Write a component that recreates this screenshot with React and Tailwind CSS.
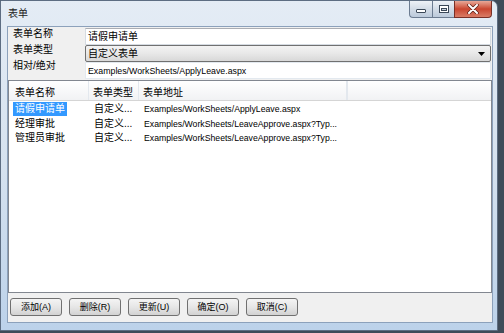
export default function App() {
  const rows = [
    { name: "请假申请单", type: "自定义...", url: "Examples/WorkSheets/ApplyLeave.aspx", sel: true },
    { name: "经理审批", type: "自定义...", url: "Examples/WorkSheets/LeaveApprove.aspx?Typ..." },
    { name: "管理员审批", type: "自定义...", url: "Examples/WorkSheets/LeaveApprove.aspx?Typ..." },
  ];
  const buttons = ["添加(A)", "删除(R)", "更新(U)", "确定(O)", "取消(C)"];
  return (
    <div className="w-[504px] h-[333px] overflow-hidden bg-[#3f4b59] font-['Liberation_Sans','Noto_Sans_CJK_SC',sans-serif] text-black">
      <div className="w-[498px] h-[331px] flex flex-col border border-[#5d6d82] rounded-tr-[7px] bg-gradient-to-b from-[#e4ecf5] via-[#d6e2ef] to-[#bcd2ea]">
        {/* title bar */}
        <div className="h-[25px] shrink-0 flex justify-between">
          <div className="pl-[7px] pt-[6px] text-[10px] leading-[14px] text-[#1b1b1b]">表单</div>
          <div className="flex h-[17px] mr-[5px]">
            <div className="w-[23px] h-full border border-[#6c7c91] border-t-0 border-r-0 rounded-bl-[4px] bg-gradient-to-b from-[#eef2f7] via-[#d3dce7] to-[#bccadb] flex items-center justify-center">
              <div className="w-[10px] h-[4px] mt-[4px] bg-white border border-[#3b4858] rounded-[1px]" />
            </div>
            <div className="w-[22px] h-full border border-[#6c7c91] border-t-0 border-r-0 bg-gradient-to-b from-[#eef2f7] via-[#d3dce7] to-[#bccadb] flex items-center justify-center">
              <div className="w-[10px] h-[8px] border border-[#3b4858] bg-white flex items-center justify-center">
                <div className="w-[6px] h-[3px] mt-[1px] border border-[#3b4858] bg-[#c8d2de]" />
              </div>
            </div>
            <div className="w-[38px] h-full border border-[#7a3026] border-t-0 rounded-br-[4px] bg-gradient-to-b from-[#e7a898] via-[#c9452f] to-[#d97c66] flex items-center justify-center">
              <svg width="12" height="10" viewBox="0 0 12 10">
                <path d="M2 1 L10 9 M10 1 L2 9" stroke="#5a1d14" strokeWidth="3.4" strokeLinecap="round" />
                <path d="M2 1 L10 9 M10 1 L2 9" stroke="#ffffff" strokeWidth="2" strokeLinecap="round" />
              </svg>
            </div>
          </div>
        </div>

        {/* client area */}
        <div className="ml-[6px] mr-[4px] flex-1 flex flex-col border border-[#8ca1bb] bg-[#f0f0f0]">
          {/* form */}
          <div className="flex shrink-0">
            <div className="w-[77px] flex flex-col gap-[2px] pl-[5px] text-[10px] leading-[14px]">
              <div>表单名称</div>
              <div>表单类型</div>
              <div>相对/绝对</div>
            </div>
            <div className="flex-1 flex flex-col pt-[1px] pr-[1px]">
              <div className="h-[17px] bg-white border border-[#d5dbe2] border-t-[#abadb3] flex items-center pl-[2px] text-[10px] leading-[14px]">
                请假申请单
              </div>
              <div className="h-[17px] rounded-[2px] border border-[#707070] bg-gradient-to-b from-[#f3f3f3] via-[#e8e8e8] to-[#d8d8d8] flex items-center justify-between pl-[2px] pr-[5px] text-[10px] leading-[14px]">
                <span>自定义表单</span>
                <svg width="7" height="4" viewBox="0 0 7 4"><path d="M0 0 H7 L3.5 4 Z" fill="#000" /></svg>
              </div>
              <div className="h-[17px] bg-white border border-[#e3e9ef] flex items-center pl-[2px] text-[8.8px] leading-[12px]">
                Examples/WorkSheets/ApplyLeave.aspx
              </div>
            </div>
          </div>

          {/* list view */}
          <div className="mt-[1px] flex-1 border border-[#828790] bg-white flex flex-col">
            <div className="h-[20px] shrink-0 flex border-b border-[#d5d5d5] bg-gradient-to-b from-white to-[#f1f2f4] text-[10px] leading-[14px]">
              <div className="w-[80px] border-r border-[#e3e8ee] pl-[6px] pt-[5px]">表单名称</div>
              <div className="w-[50px] border-r border-[#e3e8ee] pl-[4px] pt-[5px]">表单类型</div>
              <div className="w-[208px] border-r border-[#e3e8ee] pl-[4px] pt-[5px]">表单地址</div>
              <div className="flex-1 border-l border-[#e3e8ee]" />
            </div>
            <div className="flex flex-col pt-[1px]">
              {rows.map((r, i) => (
                <div key={i} className="h-[14.5px] flex items-center">
                  <div className="w-[80px] pl-[4px] text-[10px] leading-[14px]">
                    <span className={r.sel ? "bg-[#3399ff] text-white px-[2px] inline-block h-[14px]" : "px-[2px] inline-block h-[14px]"}>{r.name}</span>
                  </div>
                  <div className="w-[50px] pl-[5px] text-[10px] leading-[14px] whitespace-nowrap">{r.type}</div>
                  <div className="pl-[5px] text-[8.7px] leading-[12px] whitespace-nowrap">{r.url}</div>
                </div>
              ))}
            </div>
          </div>

          {/* buttons */}
          <div className="h-[29px] shrink-0 flex gap-[7px] pl-[2px] pt-[5px]">
            {buttons.map((b) => (
              <div key={b} className="w-[52px] h-[18px] rounded-[3px] border border-[#707070] bg-gradient-to-b from-[#f4f4f4] via-[#e6e6e6] to-[#d2d2d2] flex items-center justify-center text-[9px] leading-[12px]">
                {b}
              </div>
            ))}
          </div>
        </div>
        <div className="h-[7px] shrink-0" />
      </div>
    </div>
  );
}
